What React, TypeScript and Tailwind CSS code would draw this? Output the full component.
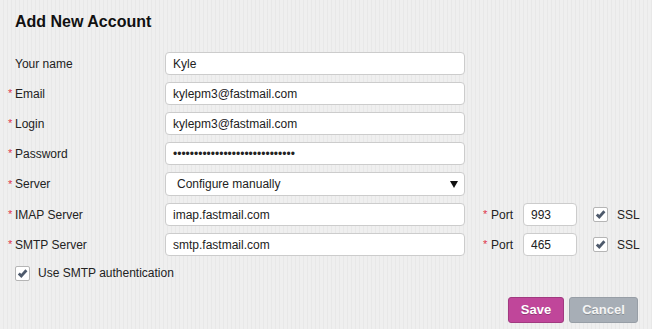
import React from "react";

const Check = () => (
  <div className="w-[15px] h-[15px] rounded-[2px] border border-[#b5b5b5] bg-white flex items-center justify-center shrink-0">
    <svg width="11" height="11" viewBox="0 0 11 11">
      <path d="M1.8 5.4 L4.3 7.9 L9.4 2.3" fill="none" stroke="#4e5a6c" strokeWidth="2.8" strokeLinecap="butt" strokeLinejoin="miter" />
    </svg>
  </div>
);

const inputCls =
  "shrink-0 h-[23px] rounded-[4px] border border-[#cccccc] bg-white px-[7px] text-[12px] text-[#222] outline-none";

const Label = ({ text, req = true }: { text: string; req?: boolean }) => (
  <div className="w-[157px] flex items-center text-[12px] text-[#222] shrink-0">
    <span className="w-[7px] text-[#e0344a] text-[11px] leading-none">{req ? "*" : ""}</span>
    <span>{text}</span>
  </div>
);

const Row = ({ label, value, req = true, type = "text" }: { label: string; value: string; req?: boolean; type?: string }) => (
  <div className="flex items-center">
    <Label text={label} req={req} />
    <input readOnly type={type} value={value} className={`${inputCls} w-[300px]`} />
  </div>
);

const ServerRow = ({ label, value, port }: { label: string; value: string; port: string }) => (
  <div className="flex items-center">
    <Label text={label} />
    <input readOnly value={value} className={`${inputCls} w-[300px]`} />
    <div className="ml-[18px] w-[40px] flex items-center text-[12px] text-[#222] shrink-0">
      <span className="w-[8px] text-[#e0344a] text-[11px] leading-none">*</span>
      <span>Port</span>
    </div>
    <input readOnly value={port} className={`${inputCls} w-[54px]`} />
    <div className="ml-[16px] shrink-0">
      <Check />
    </div>
    <span className="ml-[9px] text-[12px] text-[#222] shrink-0">SSL</span>
  </div>
);

export default function App() {
  return (
    <div
      className="w-full h-[329px] bg-[repeating-linear-gradient(90deg,#efefef_0px,#efefef_3px,#e8e8e8_3px,#e8e8e8_4px)] pl-[8px] pr-[14px] pt-[13px]"
      style={{ fontFamily: '"Liberation Sans", Arial, sans-serif' }}
    >
      <h1 className="pl-[7px] text-[16px] leading-[18px] font-bold text-[#111]">Add New Account</h1>
      <div className="mt-[21px] flex flex-col gap-[7px]">
        <Row label="Your name" value="Kyle" req={false} />
        <Row label="Email" value="kylepm3@fastmail.com" />
        <Row label="Login" value="kylepm3@fastmail.com" />
        <div className="flex items-center">
          <Label text="Password" />
          <div className={`${inputCls} w-[300px] flex items-center text-[12px]`}>
            {"•".repeat(29)}
          </div>
        </div>
        <div className="flex items-center">
          <Label text="Server" />
          <div className="relative w-[300px] h-[24px] shrink-0">
            <div className="h-full w-full rounded-[4px] border border-[#cccccc] bg-white pl-[11px] flex items-center text-[12px] text-[#222]">
              Configure manually
            </div>
            <svg className="absolute right-[7px] top-[9px]" width="8" height="7" viewBox="0 0 8 7">
              <path d="M0 0 H8 L4 7 Z" fill="#111" />
            </svg>
          </div>
        </div>
        <ServerRow label="IMAP Server" value="imap.fastmail.com" port="993" />
        <ServerRow label="SMTP Server" value="smtp.fastmail.com" port="465" />
      </div>
      <div className="mt-[8px] pl-[7px] flex items-center">
        <Check />
        <span className="ml-[8px] text-[12px] text-[#222]">Use SMTP authentication</span>
      </div>
      <div className="mt-[15px] flex justify-end gap-[5px]">
        <button className="w-[56px] h-[26px] rounded-[3px] border border-[#a13a80] bg-[#c0469a] text-white text-[13px] font-bold [text-shadow:0_1px_0_rgba(0,0,0,0.25)]">
          Save
        </button>
        <button className="w-[69px] h-[26px] rounded-[3px] border border-[#979ea6] bg-[#a7aeb6] text-[#f4f4f4] text-[13px] font-bold [text-shadow:0_1px_0_rgba(0,0,0,0.2)]">
          Cancel
        </button>
      </div>
    </div>
  );
}
